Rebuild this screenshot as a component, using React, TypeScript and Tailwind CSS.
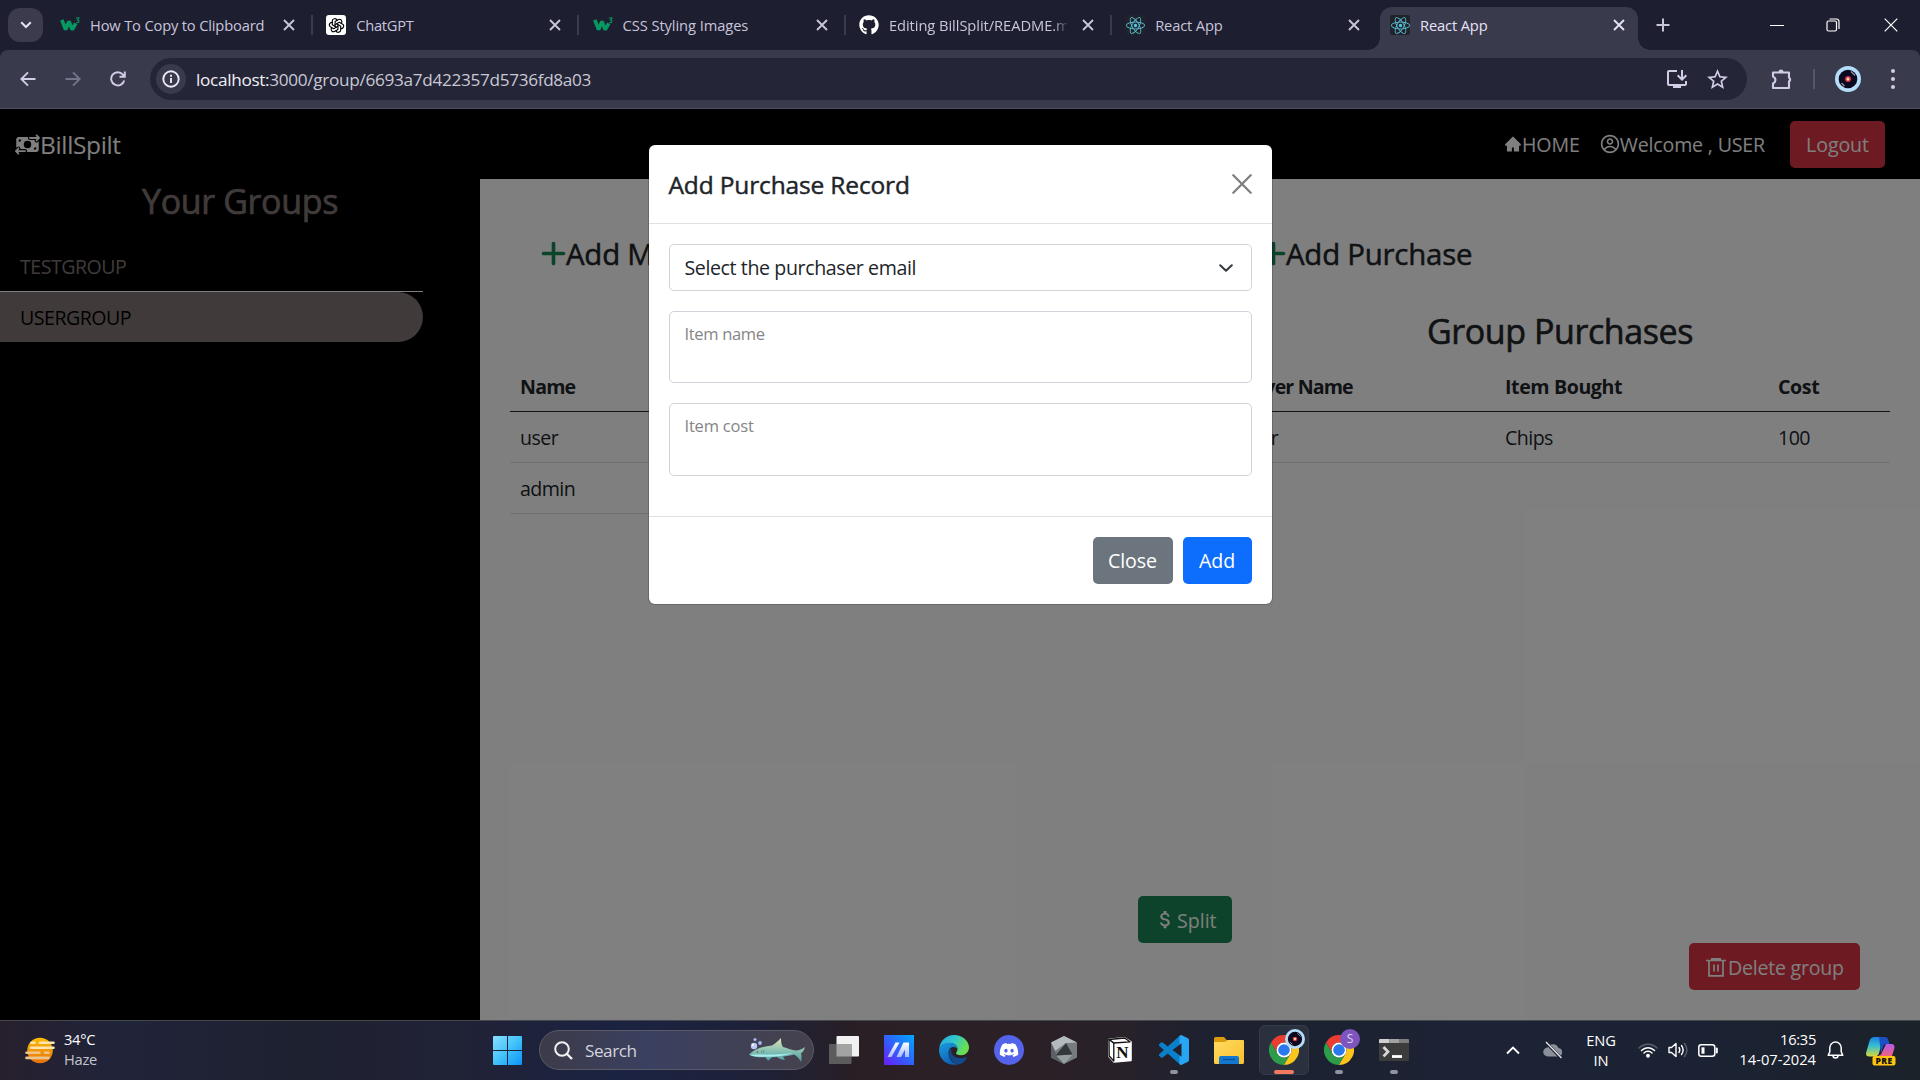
import React from "react";
import { FaGithub, FaReact, FaDiscord } from "react-icons/fa";
import { FaMoneyBillTransfer, FaPlus } from "react-icons/fa6";
import { AiFillHome } from "react-icons/ai";
import { CgProfile } from "react-icons/cg";
import { MdAttachMoney, MdOutlineInstallDesktop, MdStarBorder } from "react-icons/md";
import { TbBrandOpenai } from "react-icons/tb";

/* ---------- browser icons ---------- */

const Cross = ({ className = "" }: { className?: string }) => (
  <svg viewBox="0 0 12 12" className={`size-3 shrink-0 ${className}`} fill="none" stroke="currentColor" strokeWidth="1.9">
    <path d="M1 1 11 11M11 1 1 11" />
  </svg>
);

const W3Icon = () => (
  <svg viewBox="0 0 20 20" className="size-5 shrink-0">
    <path d="M1.800 4.800 5.600 14.600 9 6.500 12.200 14.600 15.800 8.400" fill="none" stroke="#059862" strokeWidth="3.700" strokeLinejoin="bevel" />
    <path d="M15.800 3h3.200l-1.600 2c2.600.2 1.700 3.600-1.300 2.500" fill="none" stroke="#059862" strokeWidth="1.100" />
  </svg>
);

const ReactIcon = () => (
  <span className="flex size-5 shrink-0 items-center justify-center rounded-[2px] bg-[#20232a]">
    <FaReact className="size-[19px] text-[#58c4dc]" />
  </span>
);

const GptIcon = () => (
  <span className="flex size-5 shrink-0 items-center justify-center rounded-[3px] bg-white">
    <TbBrandOpenai className="size-[17px] text-black" strokeWidth={1.6} />
  </span>
);

type TabData = { title: string; icon: React.ReactNode; tracking: string; last?: boolean };

const TABS: TabData[] = [
  { title: "How To Copy to Clipboard", icon: <W3Icon />, tracking: "tracking-[-0.170px]" },
  { title: "ChatGPT", icon: <GptIcon />, tracking: "tracking-[-0.3px]" },
  { title: "CSS Styling Images", icon: <W3Icon />, tracking: "tracking-[-0.08px]" },
  { title: "Editing BillSplit/README.md", icon: <FaGithub className="size-5 shrink-0 text-white" />, tracking: "tracking-[-0.06px]" },
  { title: "React App", icon: <ReactIcon />, tracking: "tracking-[-0.15px]", last: true },
];

function TabStrip() {
  return (
    <div className="flex h-[50px] items-start bg-[#1d1e2f] text-[14.7px] text-[#c8c4dc]">
      <div className="mt-2 ml-2 flex h-[34px] w-[35px] items-center justify-center rounded-xl bg-[#3b3b4d] text-[#e4e0f4]">
        <svg viewBox="0 0 12 8" className="h-2 w-3" fill="none" stroke="currentColor" strokeWidth="2"><path d="M1.2 1.2 6 6l4.800-4.800" /></svg>
      </div>
      <div className="ml-1 flex h-[50px] w-[1334px]">
        {TABS.map((t, i) => (
          <div key={i} className="flex h-[50px] w-[266.300px] shrink-0 items-center pl-[13px]">
            {t.icon}
            <span className={`ml-[10px] w-[178px] shrink-0 overflow-hidden whitespace-nowrap ${t.tracking} ${i === 3 ? "[mask-image:linear-gradient(90deg,#000_164px,transparent_180px)]" : ""}`}>
              {t.title}
            </span>
            <Cross className="ml-[15px]" />
            {!t.last && <span className="ml-[16px] h-5 w-[2px] shrink-0 bg-[#3b3b4d]" />}
          </div>
        ))}
      </div>
      <div className="-ml-[13px] flex h-[50px] items-end">
        <span className="size-3 bg-[radial-gradient(circle_at_0_0,transparent_11.500px,#3a3a4d_12px)]" />
        <div className="flex h-[43px] w-[258px] items-center rounded-t-xl bg-[#3a3a4d] pb-[7px] pl-[10px] text-[#e6e2f6]">
          <ReactIcon />
          <span className="ml-[10px] w-[178px] tracking-[-0.15px]">React App</span>
          <Cross className="ml-[15px]" />
        </div>
        <span className="size-3 bg-[radial-gradient(circle_at_100%_0,transparent_11.500px,#3a3a4d_12px)]" />
      </div>
      <div className="flex h-[50px] flex-1 items-center">
        <svg viewBox="0 0 14 14" className="ml-[6px] size-[14px]" stroke="currentColor" strokeWidth="2"><path d="M7 .5v13M.5 7h13" /></svg>
        <div className="ml-auto flex items-center text-white">
          <span className="mr-[42px] h-px w-[14px] bg-white" />
          <svg viewBox="0 0 14 14" className="mr-[44px] size-[14px]" fill="none" stroke="currentColor" strokeWidth="1.200">
            <rect x="1" y="3" width="9.500" height="10" rx="1.500" /><path d="M3.500 1h7a2.500 2.500 0 0 1 2.500 2.500v7.500" />
          </svg>
          <svg viewBox="0 0 14 14" className="mr-[22px] size-[14px]" stroke="currentColor" strokeWidth="1.200"><path d="M.7.700l12.600 12.600M13.300.700.7 13.300" /></svg>
        </div>
      </div>
    </div>
  );
}

const Avatar = ({ className = "" }: { className?: string }) => (
  <svg viewBox="0 0 26 26" className={className}>
    <circle cx="13" cy="13" r="13" fill="#b5dcf8" />
    <circle cx="13" cy="13" r="9.300" fill="#0b0820" />
    <path d="M16 5.500l4 4M6.500 17l3 3" stroke="#8f95a5" strokeWidth="1.300" />
    <circle cx="13" cy="13" r="3" fill="#d8324f" />
    <circle cx="13" cy="13" r="1.500" fill="#ffd9a0" />
  </svg>
);

function Toolbar() {
  return (
    <div className="bg-[#1d1e2f]">
      <div className="flex h-[59px] items-center rounded-t-lg border-b border-[#4c4d57] bg-[#3a3a4d] text-[#d2cde6]">
        <svg viewBox="0 0 16 16" className="ml-[20px] size-4" fill="none" stroke="currentColor" strokeWidth="1.900"><path d="M15.500 8H1.500M8 1.300 1.300 8 8 14.700" /></svg>
        <svg viewBox="0 0 16 16" className="ml-[29px] size-4 text-[#75748a]" fill="none" stroke="currentColor" strokeWidth="1.900"><path d="M.5 8h14M8 1.300 14.700 8 8 14.700" /></svg>
        <svg viewBox="0 0 16 16" className="ml-[29px] size-4" fill="none" stroke="currentColor" strokeWidth="1.900"><path d="M14.200 9.400A6.600 6.600 0 1 1 12.900 3.600L14.600 5.600M14.800.5v5.300H9.500" /></svg>
        <div className="ml-[24px] flex h-[42px] w-[1597px] items-center rounded-full bg-[#242536] pl-[6px]">
          <span className="flex size-[30px] items-center justify-center rounded-full bg-[#3a3a4d]">
            <svg viewBox="0 0 18 18" className="size-[18px]" fill="none" stroke="#eceaf6" strokeWidth="1.900"><circle cx="9" cy="9" r="7.700" /><path d="M9 8v5M9 4.700v2" /></svg>
          </span>
          <span className="ml-[10px] pt-px text-[17.200px] tracking-[-0.320px] text-[#c9c8d4]"><span className="text-[#f0eff6]">localhost:</span>3000/group/6693a7d422357d5736fd8a03</span>
          <MdOutlineInstallDesktop className="ml-auto size-6" />
          <MdStarBorder className="mr-[17px] ml-[16px] size-[25px]" />
        </div>
        <svg viewBox="0 0 22 22" className="ml-[24px] size-[22px]" fill="none" stroke="currentColor" strokeWidth="2.100" strokeLinejoin="round">
          <path d="M2 4.500h16v5.200c1.500.3 1.500 3.300 0 3.600V20H2v-4.600c3.300-1.600 3.300-5.200 0-6.800z" />
          <path d="M7.500 4a2.500 2.500 0 0 1 5 0zM18.300 9.200a2.400 2.400 0 0 1 0 4.600z" fill="currentColor" stroke="none" />
        </svg>
        <span className="ml-[20px] h-5 w-[2px] bg-[#56566a]" />
        <Avatar className="ml-[20px] size-[26px]" />
        <svg viewBox="0 0 4 20" className="ml-[30px] h-5 w-1" fill="currentColor"><circle cx="2" cy="2" r="2" /><circle cx="2" cy="10" r="2" /><circle cx="2" cy="18" r="2" /></svg>
      </div>
    </div>
  );
}

/* ---------- application page ---------- */

function Navbar() {
  return (
    <header className="flex h-[70px] shrink-0 items-center bg-black pl-[15px] text-white">
      <FaMoneyBillTransfer className="size-[25px]" />
      <span className="pt-[2px] text-[24.500px] tracking-[-0.35px]">BillSpilt</span>
      <nav className="ml-auto flex items-center text-[19.600px]">
        <AiFillHome className="size-[18px]" />
        <span className="pt-[2px] tracking-[-0.100px]">HOME</span>
        <CgProfile className="ml-[20px] size-[20px]" />
        <span className="pt-[2px] tracking-[-0.170px]">Welcome , USER</span>
        <button className="mr-[35px] ml-[25px] h-[47px] w-[95px] rounded-[5px] bg-[#dc3545] pt-[2px] tracking-[-0.100px]">Logout</button>
      </nav>
    </header>
  );
}

const medium = "[-webkit-text-stroke:0.500px_currentColor]";

function Sidebar() {
  return (
    <aside className="w-[480px] shrink-0 bg-black text-[#807674]">
      <h3 className={`mt-[1px] text-center text-[34px] leading-[42px] tracking-[-0.360px] [-webkit-text-stroke:0.700px_currentColor]`}>Your Groups</h3>
      <ul className="mt-[18px] w-[423px] text-[19.600px] tracking-[-0.500px]">
        <li className="flex h-[52px] items-center border-b border-white pt-[2px] pl-5">TESTGROUP</li>
        <li className="flex h-[50px] items-center rounded-r-[25px] bg-[#807674] pt-[2px] pl-5 text-black">USERGROUP</li>
      </ul>
    </aside>
  );
}

function AddTitle({ children }: { children: string }) {
  return (
    <div className="flex h-[60px] items-center pl-[29px] text-[29.400px]">
      <FaPlus className="size-[29px] text-[#198754]" />
      <span className={`-ml-[2px] pt-[2px] tracking-[-0.220px] ${medium}`}>{children}</span>
    </div>
  );
}

const cell = "h-[51px] px-[10px] pt-[2px] text-left align-middle";
const headCell = "h-[50px] px-[10px] pt-[3px] text-left align-middle font-bold";

function Content() {
  return (
    <main className="flex flex-1 flex-col bg-white pt-[44px] text-[#212529]">
      <div className="grid grid-cols-2">
        <section className="px-[30px]">
          <AddTitle>Add Member</AddTitle>
          <table className="mt-[78px] w-full border-collapse text-[19.600px] leading-[30px]">
            <thead><tr className="border-b border-[#212529]"><th className={`${headCell} tracking-[-0.800px]`}>Name</th></tr></thead>
            <tbody className="tracking-[-0.550px]">
              <tr className="border-b border-[#dee2e6]"><td className={cell}>user</td></tr>
              <tr className="border-b border-[#dee2e6]"><td className={cell}>admin</td></tr>
            </tbody>
          </table>
        </section>
        <section className="px-[30px]">
          <AddTitle>Add Purchase</AddTitle>
          <h3 className="mt-[27px] text-center text-[34px] leading-[42px] tracking-[-0.420px] [-webkit-text-stroke:0.600px_currentColor]">Group Purchases</h3>
          <table className="mt-[9px] w-full table-fixed border-collapse text-[19.600px] leading-[30px]">
            <colgroup><col className="w-[265px]" /><col className="w-[273px]" /><col /></colgroup>
            <thead>
              <tr className="border-b border-[#212529] tracking-[-0.400px]">
                <th className={`${headCell} tracking-[-0.850px]`}>Buyer Name</th><th className={headCell}>Item Bought</th><th className={headCell}>Cost</th>
              </tr>
            </thead>
            <tbody className="tracking-[-0.550px]">
              <tr className="border-b border-[#dee2e6]"><td className={cell}>user</td><td className={cell}>Chips</td><td className={cell}>100</td></tr>
            </tbody>
          </table>
        </section>
      </div>
      <div className="mt-auto mb-[30px] flex flex-col text-[19.600px] text-white">
        <button className="ml-[658px] flex h-[47px] w-[94px] items-center rounded-[5px] bg-[#198754] pl-[16px]">
          <MdAttachMoney className="size-[23px]" />
          <span className="pt-[2px]">Split</span>
        </button>
        <button className="mr-[60px] flex h-[47px] w-[171px] items-center self-end rounded-[5px] bg-[#dc3545] pl-[17px]">
          <svg viewBox="0 0 20 20" className="size-5" fill="none" stroke="currentColor" strokeWidth="1.700">
            <path d="M0 3.500h20M5 1.800h10M3 3.500v15.300h14V3.500M8 7.500v7M12 7.500v7" />
          </svg>
          <span className="ml-[2px] pt-[2px] tracking-[-0.250px]">Delete group</span>
        </button>
      </div>
    </main>
  );
}

const field = "rounded-[5px] border border-[#ced4da]";

function PurchaseModal() {
  return (
    <div className="absolute inset-0 bg-black/50">
      <div className="mx-auto mt-[36px] flex h-[459px] w-[623px] flex-col rounded-md bg-white text-[#212529] shadow-[0_0_0_1px_rgba(0,0,0,0.18)]">
        <div className="flex h-[79px] items-center border-b border-[#dee2e6] px-5">
          <h4 className="pt-[2px] text-[24.500px] tracking-[-0.150px] [-webkit-text-stroke:0.450px_currentColor]">Add Purchase Record</h4>
          <svg viewBox="0 0 20 20" className="ml-auto size-5 text-[#7f7f7f]" stroke="currentColor" strokeWidth="2.300" strokeLinecap="round"><path d="M1.300 1.300l17.400 17.400M18.700 1.300 1.300 18.700" /></svg>
        </div>
        <div className="flex h-[293px] flex-col gap-5 border-b border-[#dee2e6] p-5">
          <div className={`${field} flex h-[47px] items-center px-[15px] text-[19.600px]`}>
            <span className="pt-px tracking-[-0.400px]">Select the purchaser email</span>
            <svg viewBox="0 0 14 8" className="ml-auto mr-[3px] h-2 w-[14px]" fill="none" stroke="#343a40" strokeWidth="2" strokeLinecap="round" strokeLinejoin="round"><path d="M1.200 1.200 7 6.800l5.800-5.600" /></svg>
          </div>
          <div className={`${field} h-[72px] px-[15px] pt-[10px] text-[16.500px] leading-6 tracking-[-0.320px] text-[#858585]`}>Item name</div>
          <div className={`${field} h-[73px] px-[15px] pt-[10px] text-[16.500px] leading-6 tracking-[-0.200px] text-[#858585]`}>Item cost</div>
        </div>
        <div className="flex flex-1 items-center justify-end gap-[10px] px-5 text-[19.600px] tracking-[-0.100px] text-white">
          <button className="h-[47px] w-20 rounded-[5px] bg-[#6c757d] pt-px">Close</button>
          <button className="h-[47px] w-[69px] rounded-[5px] bg-[#0d6efd] pt-px">Add</button>
        </div>
      </div>
    </div>
  );
}

/* ---------- taskbar ---------- */

const WeatherIcon = () => (
  <svg viewBox="0 0 30 27" className="h-[27px] w-[30px]">
    <defs><linearGradient id="sun" x1="0" y1="0" x2="0" y2="1"><stop offset="0" stopColor="#fbbc05" /><stop offset="1" stopColor="#e8700c" /></linearGradient></defs>
    <circle cx="15" cy="13.500" r="12.800" fill="url(#sun)" />
    <g stroke="#fbe6b0" strokeWidth="2.600" strokeLinecap="round">
      <path d="M6.500 5.700h3M15 5.700h13.500M6 10.800h22.500" />
      <path d="M1.500 15.800h13M20 15.800h3.500M1.500 20.900h22" stroke="#edc58a" />
    </g>
  </svg>
);

const WindowsIcon = () => (
  <svg viewBox="0 0 29 29" className="size-[29px]">
    <defs><linearGradient id="win" x1="0" y1="0" x2="1" y2="1"><stop offset="0" stopColor="#8ae0ff" /><stop offset=".5" stopColor="#43c2fb" /><stop offset="1" stopColor="#0a93f5" /></linearGradient></defs>
    <path fill="url(#win)" d="M1 0h13v14H0V1a1 1 0 0 1 1-1zM15 0h13a1 1 0 0 1 1 1v13H15zM0 15h14v14H1a1 1 0 0 1-1-1zM15 15h14v13a1 1 0 0 1-1 1H15z" />
  </svg>
);

const SharkIcon = () => (
  <svg viewBox="0 0 58 26" className="h-[26px] w-[58px]">
    <defs><linearGradient id="shk" x1="0" y1="0" x2="0" y2="1"><stop offset="0" stopColor="#e0e3b6" /><stop offset=".55" stopColor="#86c0b2" /><stop offset="1" stopColor="#4a9aa8" /></linearGradient></defs>
    <path fill="url(#shk)" d="M1 17.500C6 12.500 14 9.200 24 8.500 27 7 30 4 33 1c0 4 .5 7 2 9 5 1.500 9 3 13 3.500 3 0 6-1.500 9-3.500-1 3.500-2 5-4 6.500 1 3 .5 6 0 8.500-2-3.500-4-6-7-7.500-4 1-7 1.600-11 2l2 3.500c-4-.5-6-1.500-8-3l-5 .300-4 3.500-2.500-3.500C10 20.500 5 20.200 1 17.500z" />
    <path fill="#a8efec" d="M2 18c6-1 14 0 22-.5 8 0 16-1 21-1.500-8 3-17 3.700-25 3.800-7 0-13 0-18-1.800z" />
    <circle cx="9.500" cy="15" r=".8" fill="#a33" />
    <path d="M14 13l-.5 3M16 13l-.5 3" stroke="#4d8a86" strokeWidth=".7" />
    <circle cx="6" cy="9" r="3.200" fill="#b9c8f5" /><circle cx="7" cy="2.500" r="1.600" fill="#aab6ea" /><circle cx="12" cy="6" r="1.900" fill="#a3b4ec" />
    <circle cx="5" cy="8" r="1.100" fill="#fff" />
  </svg>
);

const TaskViewIcon = () => (
  <svg viewBox="0 0 30 28" className="h-7 w-[30px]">
    <rect x="7.500" y="0" width="22.500" height="20.500" rx="1" fill="#f1f1f1" />
    <rect x="0" y="8" width="22.500" height="20" rx="1" fill="#5c5c5c" />
    <path d="M7.500 8h15v12.500h-15z" fill="#a3a3a3" />
  </svg>
);

const MyAsusIcon = () => (
  <svg viewBox="0 0 30 30" className="size-[30px]">
    <defs>
      <linearGradient id="asus" x1="0" y1="1" x2="1" y2="0"><stop offset="0" stopColor="#6a1cf5" /><stop offset=".5" stopColor="#2f63fb" /><stop offset="1" stopColor="#00a8ff" /></linearGradient>
      <linearGradient id="asusA" x1="0" y1="0" x2="0" y2="1"><stop offset="0" stopColor="#fff" /><stop offset="1" stopColor="#aab9ff" /></linearGradient>
    </defs>
    <path fill="url(#asus)" d="M0 0h30v30H0z" />
    <path fill="url(#asusA)" d="M11.500 7.500h4L7.500 22h-4zM19.500 7.500h5.500V22h-4v-7.500L17 22h-4.500z" />
  </svg>
);

const EdgeIcon = () => (
  <svg viewBox="0 0 30 30" className="size-[30px]">
    <defs>
      <linearGradient id="edgeTop" x1="0" y1="0" x2="1" y2=".4"><stop offset="0" stopColor="#2aa5e0" /><stop offset=".5" stopColor="#2fc6cf" /><stop offset="1" stopColor="#6be04e" /></linearGradient>
      <linearGradient id="edgeL" x1="0" y1="0" x2=".5" y2="1"><stop offset="0" stopColor="#1b9de2" /><stop offset="1" stopColor="#0c62b4" /></linearGradient>
    </defs>
    <path fill="url(#edgeTop)" d="M.3 13C1.200 5.500 7.500 0 15 0c8.500 0 15 6 15 12.500 0 4.500-3.500 7.700-7.800 7.700-3.700 0-5.200-1.500-5.200-2.300 0-.700 1.500-1.400 1.500-4C18.500 10.500 15 8 11 8 6 8 2 10 .3 13z" />
    <path fill="url(#edgeL)" d="M.3 13C2 9.500 6 7.800 10.500 7.800c4.500 0 8 2.700 8 6.200-1-1.500-3-2-4.500-2-3 0-5.500 4-4 9 1 4 4 7.500 8.500 8.500C9 31.500 0 25 0 15z" />
    <path fill="#134a8c" d="M10.300 15.500c-1 7 5 12 10.500 11.300 3-.5 5.500-2 7.200-4.800-3 1.500-9 1.700-12.500-.5-3-2-4-4-3-7-1 0-2 .3-2.200 1z" />
    <path fill="#134a8c" d="M10 17c0 6 4 12 9 12.400C23 29 27 26 28.300 22 25 27 12 26 10 17z" />
  </svg>
);

const HexIcon = () => (
  <svg viewBox="0 0 26 28" className="h-7 w-[26px]">
    <path fill="#757b7f" d="M13 0l13 6.500v15L13 28 0 21.500v-15z" />
    <path fill="#b4babd" d="M13 0l13 6.500-11 .5L4 15 0 6.500z" />
    <path fill="#5a6064" d="M0 6.500 4 15l1 3.500L13 28 0 21.500z" />
    <path fill="#969da1" d="M5 19.500 22 18.500 13 28z" />
    <path fill="#33383b" d="M15 7 21.500 18.500 4.500 19.500z" />
  </svg>
);

const NotionIcon = () => (
  <svg viewBox="0 0 25 26" className="h-[26px] w-[25px]">
    <path d="M2 2.200 17.500.8 24 5v18.500L7 25l-5-5.500z" fill="#fff" stroke="#fff" strokeWidth="1.600" strokeLinejoin="round" />
    <path d="M2 2.500 17.500 1 23 4.800 6.800 6z" fill="#fff" stroke="#111" strokeWidth="1.300" strokeLinejoin="round" />
    <path d="M2 2.500 6.800 6.200V24l-4.600-5z" fill="#fff" stroke="#111" strokeWidth="1.300" strokeLinejoin="round" />
    <text x="15.300" y="21" textAnchor="middle" fontFamily="Liberation Serif" fontWeight="700" fontSize="17" fill="#111">N</text>
  </svg>
);

const VsCodeIcon = () => (
  <svg viewBox="0 0 24 24" className="size-[30px]">
    <defs><linearGradient id="vsc" x1="0" x2="1"><stop offset=".66" stopColor="#0a7fca" /><stop offset=".7" stopColor="#28a5f3" /></linearGradient></defs>
    <path fill="url(#vsc)" d="M23.150 2.587L18.210.21a1.494 1.494 0 0 0-1.705.29l-9.460 8.630-4.120-3.128a.999.999 0 0 0-1.276.057L.327 7.261A1 1 0 0 0 .326 8.740L3.899 12 .326 15.260a1 1 0 0 0 .001 1.479L1.650 17.940a.999.999 0 0 0 1.276.057l4.120-3.128 9.460 8.630a1.492 1.492 0 0 0 1.704.29l4.942-2.377A1.500 1.500 0 0 0 24 20.060V3.939a1.500 1.500 0 0 0-.850-1.352zm-5.146 14.861L10.826 12l7.178-5.448v10.896z" />
  </svg>
);

const FolderIcon = () => (
  <svg viewBox="0 0 30 27" className="h-[27px] w-[30px]">
    <defs><linearGradient id="fold" x1="0" y1="0" x2="1" y2="1"><stop offset="0" stopColor="#ffda62" /><stop offset="1" stopColor="#fbc02d" /></linearGradient></defs>
    <path fill="#dd9a0a" d="M0 1.500A1.500 1.500 0 0 1 1.500 0H10l3 3.500V10H0z" />
    <path fill="url(#fold)" d="M0 5h11l2.500-2H29a1 1 0 0 1 1 1v21.500a1.500 1.500 0 0 1-1.500 1.500h-27A1.500 1.500 0 0 1 0 25.500z" />
    <path fill="#1277d1" d="M5 27v-6a2 2 0 0 1 2-2h16a2 2 0 0 1 2 2v6z" />
    <path d="M9 22.500h12" stroke="#0b4f93" strokeWidth="1.300" />
  </svg>
);

const ChromeIcon = () => (
  <svg viewBox="0 0 48 48" className="size-[30px]">
    <path fill="#ea3d2f" d="M24 12H44.800A24 24 0 0 0 3.200 12L13.600 30A12 12 0 0 1 24 12z" />
    <path fill="#2c9c4a" d="M3.200 12A24 24 0 0 0 24 48L34.400 30A12 12 0 0 1 13.600 30z" />
    <path fill="#fcc51c" d="M24 12H44.800A24 24 0 0 1 24 48L34.400 30A12 12 0 0 0 24 12z" />
    <circle cx="24" cy="24" r="12" fill="#fff" /><circle cx="24" cy="24" r="9.300" fill="#2a78ee" />
  </svg>
);

const TerminalIcon = () => (
  <svg viewBox="0 0 30 22" className="h-[22px] w-[30px]">
    <rect width="30" height="22" rx="1" fill="#3c3c3c" />
    <path fill="#cfcfcf" d="M1 0h9.500v4H0V1a1 1 0 0 1 1-1z" /><path fill="#a2a2a2" d="M10.500 0H20v4h-9.500z" /><path fill="#7c7c7c" d="M20 0h9a1 1 0 0 1 1 1v3H20z" />
    <path d="M4.500 8 9 12.700l-4.500 4.700" fill="none" stroke="#d7d7d7" strokeWidth="2.800" />
    <path d="M13 17.500h10" stroke="#fff" strokeWidth="2.800" />
  </svg>
);

const CopilotIcon = () => (
  <svg viewBox="0 0 30 29" className="h-[29px] w-[30px]">
    <defs>
      <linearGradient id="cpA" x1="0" y1="0" x2="0" y2="1"><stop offset="0" stopColor="#1b7fe0" /><stop offset=".45" stopColor="#35bfd0" /><stop offset="1" stopColor="#d9d83a" /></linearGradient>
      <linearGradient id="cpB" x1="0" y1="0" x2="0" y2="1"><stop offset="0" stopColor="#b25be8" /><stop offset="1" stopColor="#f2617c" /></linearGradient>
    </defs>
    <path fill="url(#cpB)" d="M20 7h5c3 0 4 2 3.300 4.500L26 19H12l3-1.500z" />
    <path fill="url(#cpA)" d="M8.500 0h9L13 16c-.7 2.300-2 3.500-4 3.500H3c-2.500 0-3.500-1.800-2.700-4.500L3.500 4C4.200 1.500 6 0 8.500 0z" />
    <path fill="#1b4fc4" d="M13 0h5.500c2.500 0 3.500 1.500 4 3.500L23.500 7H20c-1.500 0-2.300.7-2.700 2L15 16.500z" />
    <rect x="6.500" y="19" width="23" height="9.500" rx="2" fill="#fdc50d" />
    <text x="18" y="27" textAnchor="middle" fontFamily="Open Sans" fontWeight="800" fontSize="8.500" letterSpacing=".4" fill="#111">PRE</text>
  </svg>
);

function TaskButton({ children, dot }: { children: React.ReactNode; dot?: "idle" | "active" }) {
  return (
    <div className={`relative flex h-[50px] w-[50px] shrink-0 items-center justify-center rounded-md ${dot === "active" ? "border border-[#343a48] bg-[#2b303e]" : ""}`}>
      {children}
      {dot === "idle" && <span className="absolute bottom-[1px] left-[21px] h-1 w-2 rounded-full bg-[#8f939c]" />}
      {dot === "active" && <span className="absolute bottom-0 left-[14px] h-1 w-5 rounded-full bg-[#f4795f]" />}
    </div>
  );
}

function Taskbar() {
  return (
    <footer className="flex h-[60px] items-center border-t border-[#45474f] bg-[linear-gradient(90deg,#271f2d_0px,#20243a_110px,#1e2130_300px,#202236_460px,#1b2342_620px,#1e2138_760px,#291f24_860px,#2b2026_930px,#292128_1110px,#1d2130_1210px,#1c2334_1500px,#1b2233_1700px,#1b2229_1920px)] pb-px text-[14.700px] text-white">
      <div className="ml-[25px] flex w-[468px] items-center">
        <WeatherIcon />
        <div className="-mt-[3px] ml-[9px] leading-5 tracking-[-0.300px]"><p>34°C</p><p className="text-[#c3c4ca]">Haze</p></div>
      </div>
      <WindowsIcon />
      <div className="ml-[17px] flex h-10 w-[275px] items-center rounded-full border border-[#5a5a68] bg-[linear-gradient(90deg,#3c3b49,#3a4060_40%,#46424d)] pr-[7px] pl-[14px]">
        <svg viewBox="0 0 19 19" className="size-[19px]" fill="none" stroke="#f1f1f1" strokeWidth="2"><circle cx="8" cy="8" r="6.800" /><path d="M13 13l5 5" strokeWidth="2.400" /></svg>
        <span className="ml-[12px] pt-px text-[17.200px] tracking-[-0.500px] text-[#d3d4dc]">Search</span>
        <span className="ml-auto"><SharkIcon /></span>
      </div>
      <div className="ml-[5px] flex items-center gap-[5px]">
        <TaskButton><TaskViewIcon /></TaskButton>
        <TaskButton><MyAsusIcon /></TaskButton>
        <TaskButton><EdgeIcon /></TaskButton>
        <TaskButton><span className="flex size-[30px] items-center justify-center rounded-full bg-[#5562ea]"><FaDiscord className="size-[20px]" /></span></TaskButton>
        <TaskButton><HexIcon /></TaskButton>
        <TaskButton><NotionIcon /></TaskButton>
        <TaskButton dot="idle"><VsCodeIcon /></TaskButton>
        <TaskButton><FolderIcon /></TaskButton>
        <TaskButton dot="active"><ChromeIcon /><Avatar className="absolute top-[3px] left-[25px] size-5" /></TaskButton>
        <TaskButton dot="idle">
          <ChromeIcon />
          <span className="absolute top-[4px] left-[26px] flex size-5 items-center justify-center rounded-full bg-[#7d55bd] text-[12px] text-[#e2d4f5]">S</span>
        </TaskButton>
        <TaskButton dot="idle"><TerminalIcon /></TaskButton>
      </div>
      <svg viewBox="0 0 14 9" className="ml-[87px] h-[9px] w-[14px]" fill="none" stroke="#fff" strokeWidth="1.900"><path d="M1 7.500 7 1.500l6 6" /></svg>
      <svg viewBox="0 0 20 18" className="ml-[23px] h-[18px] w-5">
        <path fill="#8b8f99" d="M5 15.500a4.500 4.500 0 0 1-.5-9A6 6 0 0 1 15.500 7a4.300 4.300 0 0 1 0 8.500z" />
        <path d="M2.500 1 18 17" stroke="#1b2233" strokeWidth="3" /><path d="M3 1 18.500 17" stroke="#e8e8ec" strokeWidth="1.300" />
      </svg>
      <div className="ml-[22px] w-[32px] text-center leading-5 tracking-[-0.200px]"><p>ENG</p><p>IN</p></div>
      <svg viewBox="0 0 20 16" className="ml-[21px] h-4 w-5" fill="none" stroke="#fff" strokeWidth="1.500" strokeLinecap="round">
        <path d="M1 6a12.500 12.500 0 0 1 18 0" stroke="#5b606c" /><path d="M3.500 8.500a9 9 0 0 1 13 0M6 11a5.700 5.700 0 0 1 8 0" /><circle cx="10" cy="13.800" r="1.200" fill="#fff" />
      </svg>
      <svg viewBox="0 0 20 16" className="ml-[10px] h-4 w-5" fill="none" stroke="#fff" strokeWidth="1.400" strokeLinecap="round" strokeLinejoin="round">
        <path d="M1 5.500h2.500L8 1.500v13L3.500 10.500H1z" /><path d="M11 5.500c1 1.500 1 3.500 0 5M13.500 3.500c2 2.700 2 6.300 0 9" /><path d="M16.500 1.500c3 4 3 9 0 13" stroke="#5b606c" />
      </svg>
      <svg viewBox="0 0 20 13" className="ml-[10px] h-[13px] w-5" fill="none" stroke="#fff" strokeWidth="1.500">
        <rect x=".8" y=".8" width="16" height="11.400" rx="2.500" /><path d="M18.800 4.500v4" strokeWidth="2" strokeLinecap="round" /><rect x="3.500" y="3.300" width="3" height="6.400" fill="#fff" stroke="none" />
      </svg>
      <div className="-mt-[3px] ml-auto text-right leading-5"><p className="tracking-[-0.300px]">16:35</p><p>14-07-2024</p></div>
      <svg viewBox="0 0 17 19" className="ml-[11px] h-[19px] w-[17px]" fill="none" stroke="#fff" strokeWidth="1.500" strokeLinejoin="round">
        <path d="M8.500 1a5.700 5.700 0 0 0-5.700 5.700v4L1.200 14.300h14.600l-1.600-3.600v-4A5.700 5.700 0 0 0 8.500 1zM6 14.500a2.500 2.500 0 0 0 5 0" />
      </svg>
      <span className="mt-[2px] mr-[24px] ml-[22px]"><CopilotIcon /></span>
    </footer>
  );
}

export default function App() {
  return (
    <div className="flex h-[1080px] w-[1920px] flex-col overflow-hidden font-['Open_Sans','Noto_Sans',sans-serif] whitespace-nowrap">
      <TabStrip />
      <Toolbar />
      <div className="relative flex h-[911px] flex-col">
        <Navbar />
        <div className="flex flex-1"><Sidebar /><Content /></div>
        <PurchaseModal />
      </div>
      <Taskbar />
    </div>
  );
}
